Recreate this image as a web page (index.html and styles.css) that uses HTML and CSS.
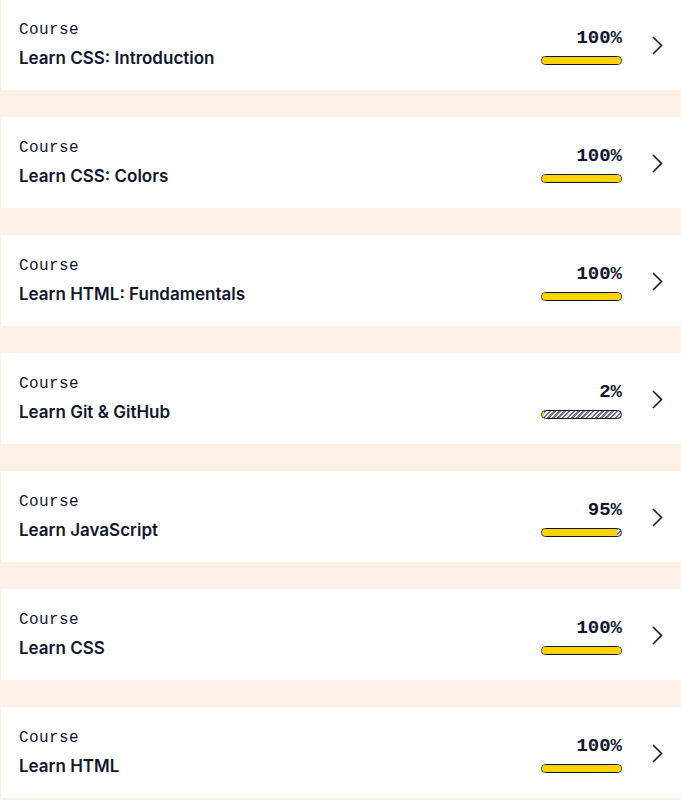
FILE: index.html
```html
<!DOCTYPE html>
<html>
<head>
<meta charset="utf-8">
<link rel="stylesheet" href="styles.css">
</head>
<body>
<ul class="list">
  <li class="card">
    <div class="info"><span class="kind">Course</span><span class="title">Learn CSS: Introduction</span></div>
    <div class="progress"><span class="pct">100%</span><div class="bar"><div class="fill" style="width:100%"></div></div></div>
    <svg class="chev" viewBox="0 0 11 19" width="11" height="19"><polyline points="1,1 9.5,9.5 1,18"/></svg>
  </li>
  <li class="card">
    <div class="info"><span class="kind">Course</span><span class="title">Learn CSS: Colors</span></div>
    <div class="progress"><span class="pct">100%</span><div class="bar"><div class="fill" style="width:100%"></div></div></div>
    <svg class="chev" viewBox="0 0 11 19" width="11" height="19"><polyline points="1,1 9.5,9.5 1,18"/></svg>
  </li>
  <li class="card">
    <div class="info"><span class="kind">Course</span><span class="title">Learn HTML: Fundamentals</span></div>
    <div class="progress"><span class="pct">100%</span><div class="bar"><div class="fill" style="width:100%"></div></div></div>
    <svg class="chev" viewBox="0 0 11 19" width="11" height="19"><polyline points="1,1 9.5,9.5 1,18"/></svg>
  </li>
  <li class="card">
    <div class="info"><span class="kind">Course</span><span class="title">Learn Git &amp; GitHub</span></div>
    <div class="progress"><span class="pct">2%</span><div class="bar"><div class="fill" style="width:2%"></div></div></div>
    <svg class="chev" viewBox="0 0 11 19" width="11" height="19"><polyline points="1,1 9.5,9.5 1,18"/></svg>
  </li>
  <li class="card">
    <div class="info"><span class="kind">Course</span><span class="title">Learn JavaScript</span></div>
    <div class="progress"><span class="pct">95%</span><div class="bar"><div class="fill" style="width:95%"></div></div></div>
    <svg class="chev" viewBox="0 0 11 19" width="11" height="19"><polyline points="1,1 9.5,9.5 1,18"/></svg>
  </li>
  <li class="card">
    <div class="info"><span class="kind">Course</span><span class="title">Learn CSS</span></div>
    <div class="progress"><span class="pct">100%</span><div class="bar"><div class="fill" style="width:100%"></div></div></div>
    <svg class="chev" viewBox="0 0 11 19" width="11" height="19"><polyline points="1,1 9.5,9.5 1,18"/></svg>
  </li>
  <li class="card">
    <div class="info"><span class="kind">Course</span><span class="title">Learn HTML</span></div>
    <div class="progress"><span class="pct">100%</span><div class="bar"><div class="fill" style="width:100%"></div></div></div>
    <svg class="chev" viewBox="0 0 11 19" width="11" height="19"><polyline points="1,1 9.5,9.5 1,18"/></svg>
  </li>
</ul>
</body>
</html>
```

FILE: styles.css
```css
html, body {
  margin: 0;
  padding: 0;
  background: #fff0e5;
}
body {
  color: #10162f;
  font-family: Inter, "Noto Sans", sans-serif;
  overflow: hidden;
}
.list {
  list-style: none;
  margin: -2px 0 0 0;
  padding: 0;
  display: flex;
  flex-direction: column;
  gap: 25px;
}
.card {
  box-sizing: border-box;
  height: 93px;
  background: #fff;
  border: 1px solid #fff0e5;
  border-right: none;
  display: flex;
  align-items: flex-start;
  padding: 0 0 0 18px;
}
.info {
  flex: 1;
  display: flex;
  flex-direction: column;
  gap: 4px;
  padding-top: 19px;
}
.kind {
  font-family: "Liberation Mono", "DejaVu Sans Mono", monospace;
  font-size: 16px;
  letter-spacing: 0.4px;
  line-height: 24px;
}
.title {
  font-size: 17px;
  font-weight: 600;
  line-height: 24px;
}
.progress {
  display: flex;
  flex-direction: column;
  align-items: flex-end;
  padding-top: 28px;
  gap: 6px;
}
.pct {
  font-family: "Liberation Mono", "DejaVu Sans Mono", monospace;
  font-weight: 700;
  font-size: 19px;
  line-height: 23px;
}
.bar {
  box-sizing: border-box;
  width: 81px;
  height: 9px;
  border: 1px solid #10162f;
  border-radius: 5px;
  overflow: hidden;
  background: repeating-linear-gradient(135deg, #f1f1f3 0 1.6px, #6f7385 1.6px 3.4px);
}
.fill {
  height: 100%;
  background: #ffd300;
}
.chev {
  margin: 37px 18px 0 30px;
  fill: none;
  stroke: #10162f;
  stroke-width: 1.6;
}
```
